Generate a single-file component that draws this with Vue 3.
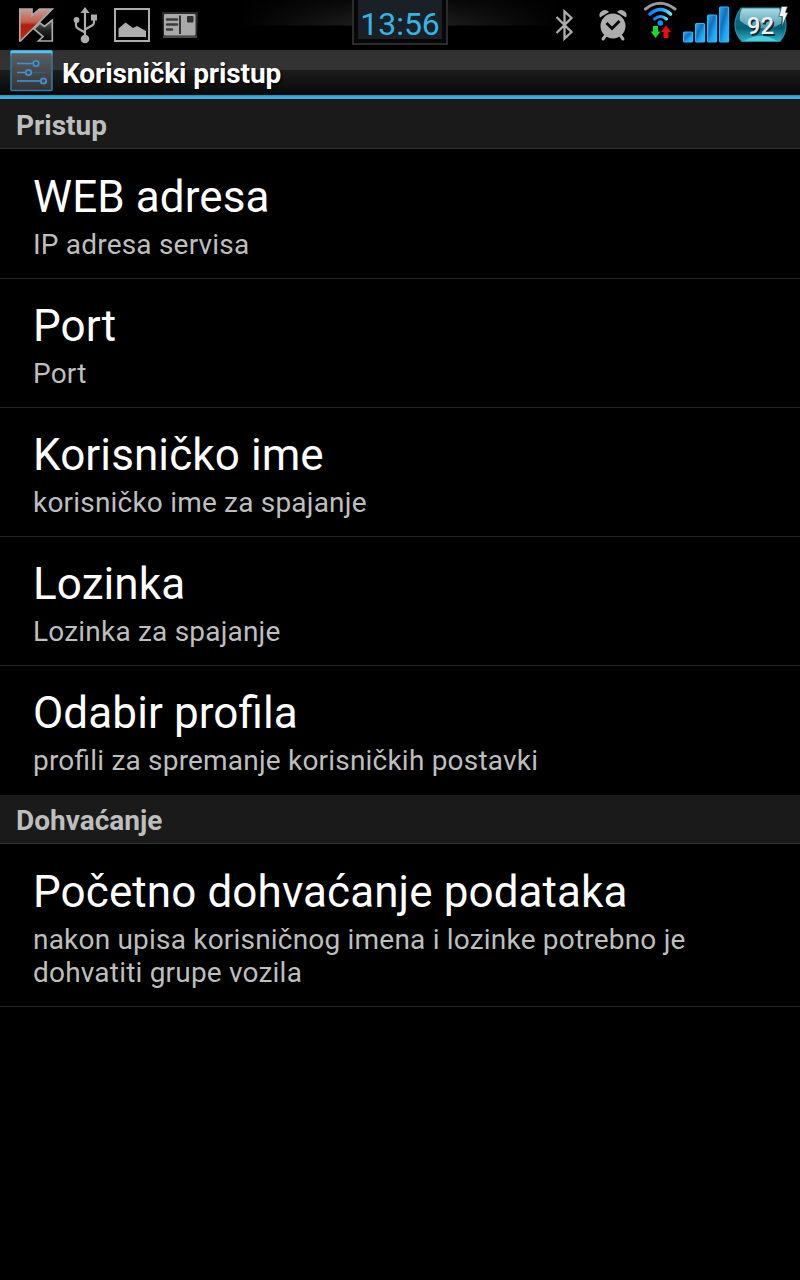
<script setup>
const sections = [
  {
    title: 'Pristup',
    items: [
      { id: 'web', title: 'WEB adresa', summary: 'IP adresa servisa' },
      { id: 'port', title: 'Port', summary: 'Port' },
      { id: 'user', title: 'Korisničko ime', summary: 'korisničko ime za spajanje' },
      { id: 'password', title: 'Lozinka', summary: 'Lozinka za spajanje' },
      { id: 'profile', title: 'Odabir profila', summary: 'profili za spremanje korisničkih postavki' },
    ],
  },
  {
    title: 'Dohvaćanje',
    items: [
      {
        id: 'fetch',
        title: 'Početno dohvaćanje podataka',
        summary: 'nakon upisa korisničnog imena i lozinke potrebno je dohvatiti grupe vozila',
      },
    ],
  },
]
</script>

<template>
  <div class="screen">
    <header class="status-bar">
      <svg class="tray" width="210" height="50" viewBox="0 0 210 50">
        <defs>
          <linearGradient id="red" x1="0" y1="0" x2="0" y2="1">
            <stop offset="0" stop-color="#c99a92" />
            <stop offset="0.4" stop-color="#c0604f" />
            <stop offset="0.5" stop-color="#b01d0c" />
            <stop offset="1" stop-color="#c02a16" />
          </linearGradient>
          <linearGradient id="dark" x1="0" y1="0" x2="0" y2="1">
            <stop offset="0" stop-color="#666" />
            <stop offset="0.5" stop-color="#222" />
            <stop offset="1" stop-color="#050505" />
          </linearGradient>
        </defs>
        <!-- antivirus -->
        <g stroke="#a9a9a9" stroke-width="1.700">
          <path d="M19.800 9h12.200v6.500L39.500 9h12.800L20.500 41h-.7z" fill="url(#red)" />
          <path d="M34 29l6-6 4.500 3.500 7.800-6.500v21H38.500l4.500-4.500z" fill="url(#dark)" />
        </g>
        <!-- usb -->
        <g fill="none" stroke="#adadad" stroke-width="2.200">
          <path d="M85 12v25M76 22v3.500q0 2 2 3l7 4M94 19v3.500q0 2-2 3l-7 4" />
        </g>
        <g fill="#adadad">
          <path d="M85 7l4.500 6h-9z" />
          <circle cx="76.500" cy="20" r="2.900" />
          <path d="M91 14.500h6v6h-6z" />
          <circle cx="85" cy="39" r="4.300" />
        </g>
        <!-- picture -->
        <path d="M115 9h34v32h-34z" fill="none" stroke="#adadad" stroke-width="2" />
        <path d="M118.500 37v-8.500l7-6 7.500 5.500 4-2 9 5v6z" fill="#adadad" />
        <!-- card -->
        <path d="M162 12h36l-1 26h-34z" fill="#2b2b2b" />
        <path d="M163 37h34" stroke="#555" stroke-width="1.500" />
        <rect x="164" y="14" width="31.500" height="21.500" rx="1" fill="#a9a9a9" />
        <path d="M167 19.500h10M167 24.500h10M167 29.500h5" stroke="#3b3b3b" stroke-width="2.500" stroke-linecap="round" />
        <path d="M180 15.500v18.500" stroke="#333" stroke-width="2" />
        <rect x="187" y="16" width="6.500" height="6.500" rx="1" fill="#303030" />
      </svg>

      <div class="clock"><span>13:56</span></div>

      <svg class="tray" width="260" height="50" viewBox="540 0 260 50">
        <defs>
          <linearGradient id="bar" x1="0" y1="0" x2="1" y2="1">
            <stop offset="0" stop-color="#22aaf7" />
            <stop offset="0.4" stop-color="#1270b8" />
            <stop offset="0.65" stop-color="#16a5f4" />
            <stop offset="1" stop-color="#35bdff" />
          </linearGradient>
          <linearGradient id="gloss" x1="0" y1="0" x2="0" y2="1">
            <stop offset="0" stop-color="#a5dce6" />
            <stop offset="1" stop-color="#4d98a8" />
          </linearGradient>
          <linearGradient id="cell" x1="0" y1="0" x2="0" y2="1">
            <stop offset="0" stop-color="#167f98" />
            <stop offset="0.6" stop-color="#075d76" />
            <stop offset="1" stop-color="#2bb7ce" />
          </linearGradient>
          <linearGradient id="wave" x1="0" y1="0" x2="1" y2="0">
            <stop offset="0" stop-color="#137cff" />
            <stop offset="0.6" stop-color="#26a2fa" />
            <stop offset="1" stop-color="#68e6ee" />
          </linearGradient>
        </defs>
        <!-- bluetooth -->
        <path d="M556.500 17l15 15-7 6.500V11.500l7 6.500-15 15" fill="none" stroke="#adadad" stroke-width="2.300" />
        <!-- alarm -->
        <g fill="#adadad">
          <circle cx="613" cy="26" r="12.500" />
          <path d="M600 17.500q-2-4 2-6.500 4-2.500 7 1zM626 17.500q2-4-2-6.500-4-2.500-7 1z" />
        </g>
        <path d="M606 35l-3 4M620 35l3 4" stroke="#adadad" stroke-width="3" stroke-linecap="round" />
        <path d="M606.500 23l5.500 5.500 7.500-7.500" fill="none" stroke="#090909" stroke-width="2.800" />
        <!-- wifi with traffic arrows -->
        <g fill="none" stroke-linecap="round">
          <path d="M645.500 9q14.500-11.500 29.500 0" stroke="#9b9b9b" stroke-width="3" />
          <path d="M650 14q10.500-9 20.500 0" stroke="url(#wave)" stroke-width="3.600" />
          <path d="M654.500 19q6-5 12 0" stroke="url(#wave)" stroke-width="3" />
        </g>
        <circle cx="660.300" cy="23" r="2.800" fill="#168cff" />
        <path d="M653 26h5v5.500h2.500L655.500 38l-4.700-6.500h2.200z" fill="#16df21" />
        <path d="M663.500 38h5v-6h2.500l-5-6.500-5 6.500h2.500z" fill="#f20b0b" />
        <!-- signal -->
        <g fill="url(#bar)" stroke="#2ab6ff" stroke-width="1.200">
          <rect x="683.600" y="32" width="9" height="10" rx="1" />
          <rect x="695.600" y="23.500" width="9" height="18.500" rx="1" />
          <rect x="707.600" y="15" width="9" height="27" rx="1" />
          <rect x="719.600" y="7" width="9" height="35" rx="1" />
        </g>
        <!-- battery -->
        <path d="M741 8h39q6 8 6 17t-6 16.500h-38q-7-7.500-7-16.500t6-17z" fill="url(#cell)" stroke="#278fa1" stroke-width="1.200" />
        <path d="M742 8.500h37q4 7 2 15-7 5-18 5-15 0-23-8-1-6 2-12z" fill="url(#gloss)" />
        <path d="M744 41q8-5 16-5 9 0 17 5z" fill="#50cbdc" />
        <text x="762" y="35.500" class="level level-shadow" text-anchor="middle">92</text>
        <text x="760.500" y="34" class="level" text-anchor="middle">92</text>
        <path d="M781.500 6.500h6l-2 6h2.500l-6 14 .5-10h-3.500z" fill="#f2f5f5" stroke="#26383c" stroke-width="0.600" />
      </svg>
    </header>

    <div class="title-bar">
      <svg width="44" height="42" viewBox="0 0 44 42">
        <defs>
          <linearGradient id="tile" x1="0" y1="0" x2="0" y2="1">
            <stop offset="0" stop-color="#606060" />
            <stop offset="1" stop-color="#343434" />
          </linearGradient>
          <linearGradient id="edge" x1="0" y1="0" x2="0" y2="1">
            <stop offset="0" stop-color="#48bff0" />
            <stop offset="0.150" stop-color="#397293" />
            <stop offset="1" stop-color="#2e78ac" />
          </linearGradient>
        </defs>
        <rect x="1" y="1" width="41" height="39.500" rx="1" fill="url(#tile)" stroke="url(#edge)" stroke-width="1.600" />
        <path d="M1 2h41" stroke="#4cc3f2" stroke-width="2.400" />
        <path d="M7 13.500h29M7 22.500h29M7 31h29" stroke="#2f617f" stroke-width="1.400" />
        <path d="M7 13.500h16M7 22.500h8M7 31h24" stroke="#3b93cf" stroke-width="1.500" />
        <g fill="#474747" stroke="#3b93cf" stroke-width="1.800">
          <circle cx="26" cy="13.500" r="2.700" />
          <circle cx="18.500" cy="22.500" r="2.700" />
          <circle cx="33.500" cy="31" r="2.700" />
        </g>
      </svg>
      <h1>Korisnički pristup</h1>
    </div>

    <main>
      <section v-for="section in sections" :key="section.title">
        <h2>{{ section.title }}</h2>
        <ul>
          <li v-for="item in section.items" :key="item.id">
            <p class="name">{{ item.title }}</p>
            <p class="summary">{{ item.summary }}</p>
          </li>
        </ul>
      </section>
    </main>
  </div>
</template>

<style>
body {
  background: #000;
}
</style>

<style scoped>
.screen {
  width: 800px;
  height: 1280px;
  overflow: hidden;
  background: #000;
  color: #fff;
  font-family: Roboto, 'Noto Sans', sans-serif;
}

h1,
h2,
p,
ul {
  margin: 0;
  padding: 0;
  font-weight: normal;
}

.status-bar {
  display: grid;
  grid-template-columns: 1fr 96px 1fr;
  height: 50px;
  background: linear-gradient(90deg, #000 30%, transparent 44%, transparent 56%, #000 70%),
    linear-gradient(#080808, #1c1c1c 25px, #000 26px);
}

.tray {
  display: block;
}

.tray:last-child {
  justify-self: end;
}

.clock {
  box-sizing: border-box;
  height: 45px;
  padding: 0 4px 4px;
  border: 2px solid #2b2b2b;
  border-top: 0;
  background: #070707;
}

.clock span {
  display: block;
  height: 39px;
  background: #1b2026;
  color: #33b5e5;
  font-size: 32px;
  line-height: 48px;
  text-align: center;
}

.level {
  fill: #eee;
  font-size: 24px;
  font-weight: 500;
}

.level-shadow {
  fill: #10282e;
}

.title-bar {
  box-sizing: border-box;
  display: flex;
  align-items: flex-start;
  gap: 8px;
  height: 50px;
  padding-left: 10px;
  border-bottom: 1px solid #0b0b0b;
  background:
    linear-gradient(#2b86ac, #33b5e5 2px, #33b5e5) 0 45px / 100% 4px no-repeat,
    linear-gradient(#303030, #343434 20px, #1c1c1c 20px, #080808 45px);
}

.title-bar h1 {
  font-size: 28px;
  font-weight: 700;
  letter-spacing: -0.1px;
  line-height: 48px;
  text-shadow: 1px 1px 2px #000;
}

h2 {
  box-sizing: border-box;
  height: 49px;
  padding-left: 16px;
  border-bottom: 1px solid #333;
  background: #1a1a1a;
  color: #bebebe;
  font-size: 28px;
  font-weight: 700;
  line-height: 52px;
}

ul {
  list-style: none;
}

li {
  box-sizing: border-box;
  min-height: 129px;
  padding: 20px 33px 17px;
  border-bottom: 1px solid #222;
}

li:first-child {
  min-height: 130px;
  padding-top: 21px;
}

section:first-child li:last-child {
  border-bottom-color: transparent;
}

.name {
  font-size: 44px;
  letter-spacing: 0.1px;
  line-height: 54px;
  font-feature-settings: 'liga';
}

.summary {
  margin-top: 4px;
  color: #bebebe;
  font-size: 28px;
  letter-spacing: 0.2px;
  line-height: 33px;
  font-feature-settings: 'liga';
}
</style>
